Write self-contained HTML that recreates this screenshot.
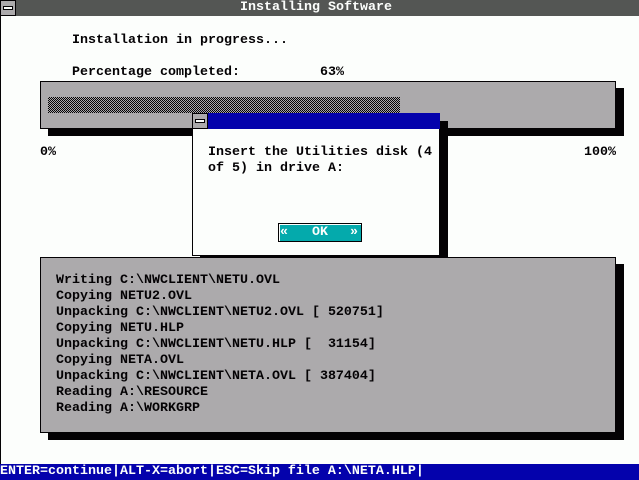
<!DOCTYPE html>
<html><head><meta charset="utf-8"><style>
*{margin:0;padding:0;box-sizing:border-box}
body{width:639px;height:480px;background:#fcfefc;position:relative;overflow:hidden;font-family:"Liberation Mono",monospace;font-size:13.33px;font-weight:bold;color:#040204}
.a{position:absolute}
.t{position:absolute;white-space:pre;line-height:16px;height:16px;top:0}
</style></head><body>
<div class="a" style="left:0;top:0;width:1px;height:464px;background:#040204"></div>
<div class="a" style="left:0;top:0;width:639px;height:16px;background:#545654"></div>
<div class="a" style="left:0;top:0;width:16px;height:16px;background:#acaaac;border:1px solid #040204"></div>
<div class="a" style="left:3px;top:6px;width:10px;height:4px;background:#fcfefc;border:1px solid #040204"></div>
<div class="t" style="left:240px;top:0;color:#fcfefc">Installing Software</div>

<div class="t" style="left:72px;top:33px">Installation in progress...</div>
<div class="t" style="left:72px;top:65px">Percentage completed:</div>
<div class="t" style="left:320px;top:65px">63%</div>

<div class="a" style="left:48px;top:88px;width:576px;height:48px;background:#040204"></div>
<div class="a" style="left:40px;top:81px;width:576px;height:48px;background:#acaaac;border:1px solid #040204"></div>
<div class="a" style="left:48px;top:97px;width:352px;height:16px;background:repeating-conic-gradient(#040204 0 25%,#acaaac 0 50%) 0 0/2px 2px"></div>

<div class="t" style="left:40px;top:145px">0%</div>
<div class="t" style="left:584px;top:145px">100%</div>

<div class="a" style="left:200px;top:121px;width:248px;height:143px;background:#040204"></div>
<div class="a" style="left:192px;top:113px;width:248px;height:143px;background:#fcfefc;border:1px solid #040204"></div>
<div class="a" style="left:192px;top:113px;width:248px;height:16px;background:#0402ac"></div>
<div class="a" style="left:192px;top:113px;width:16px;height:16px;background:#acaaac;border:1px solid #040204"></div>
<div class="a" style="left:195px;top:119px;width:10px;height:4px;background:#fcfefc;border:1px solid #040204"></div>
<div class="t" style="left:208px;top:145px">Insert the Utilities disk (4</div>
<div class="t" style="left:208px;top:161px">of 5) in drive A:</div>
<div class="a" style="left:278px;top:223px;width:84px;height:19px;background:#04aaac;border:1px solid #040204;box-shadow:inset 1px 1px 0 #fcfefc"></div>
<div class="t" style="left:280px;top:225px;color:#fcfefc">«</div>
<div class="t" style="left:312px;top:225px;color:#fcfefc">OK</div>
<div class="t" style="left:350px;top:225px;color:#fcfefc">»</div>

<div class="a" style="left:48px;top:264px;width:576px;height:176px;background:#040204"></div>
<div class="a" style="left:40px;top:257px;width:576px;height:176px;background:#acaaac;border:1px solid #040204"></div>
<div class="t" style="left:56px;top:273px">Writing C:\NWCLIENT\NETU.OVL</div>
<div class="t" style="left:56px;top:289px">Copying NETU2.OVL</div>
<div class="t" style="left:56px;top:305px">Unpacking C:\NWCLIENT\NETU2.OVL [ 520751]</div>
<div class="t" style="left:56px;top:321px">Copying NETU.HLP</div>
<div class="t" style="left:56px;top:337px">Unpacking C:\NWCLIENT\NETU.HLP [  31154]</div>
<div class="t" style="left:56px;top:353px">Copying NETA.OVL</div>
<div class="t" style="left:56px;top:369px">Unpacking C:\NWCLIENT\NETA.OVL [ 387404]</div>
<div class="t" style="left:56px;top:385px">Reading A:\RESOURCE</div>
<div class="t" style="left:56px;top:401px">Reading A:\WORKGRP</div>

<div class="a" style="left:0;top:464px;width:639px;height:16px;background:#0402ac"></div>
<div class="t" style="left:0;top:464px;color:#fcfefc">ENTER=continue|ALT-X=abort|ESC=Skip file A:\NETA.HLP|</div>
</body></html>
